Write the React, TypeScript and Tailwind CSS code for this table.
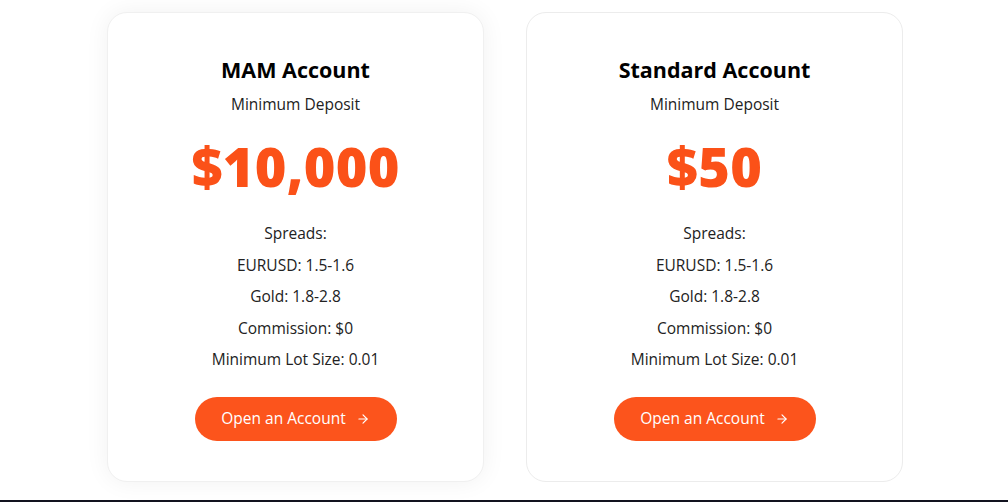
import React from 'react';
import { ArrowRight } from 'lucide-react';

interface Plan {
  name: string;
  deposit: string;
  eurusd: string;
  gold: string;
  commission: string;
  lot: string;
  raised?: boolean;
}

const plans: Plan[] = [
  { name: 'MAM Account', deposit: '$10,000', eurusd: '1.5-1.6', gold: '1.8-2.8', commission: '$0', lot: '0.01', raised: true },
  { name: 'Standard Account', deposit: '$50', eurusd: '1.5-1.6', gold: '1.8-2.8', commission: '$0', lot: '0.01' },
];

const PlanCard: React.FC<{ plan: Plan }> = ({ plan }) => (
  <div
    className={
      plan.raised
        ? 'w-[377px] h-[470px] bg-white rounded-[20px] border border-[#f0f0f0] shadow-[0_0_24px_rgba(0,0,0,0.06)] flex flex-col items-center pt-[42px]'
        : 'w-[377px] h-[470px] bg-white rounded-[20px] border border-[#ececec] flex flex-col items-center pt-[42px]'
    }
  >
    {/* Header */}
    <h3 className="text-[21.5px] leading-[30px] font-bold text-black">{plan.name}</h3>
    <p className="mt-[8px] text-[15.5px] leading-[22px] text-[#222]">Minimum Deposit</p>
    <div className="mt-[16px] text-[54px] leading-[70px] font-extrabold text-[#fb5118] tracking-[0.3px]">{plan.deposit}</div>

    {/* Spreads */}
    <div className="mt-[21px] flex flex-col items-center gap-[9.5px] text-[15.5px] leading-[22px] text-[#222]">
      <span>Spreads:</span>
      <span>EURUSD: {plan.eurusd}</span>
      <span>Gold: {plan.gold}</span>
      <span>Commission: {plan.commission}</span>
      <span>Minimum Lot Size: {plan.lot}</span>
    </div>

    <button className="mt-[27px] w-[202px] h-[44px] rounded-full bg-[#fc541c] text-white text-[15.5px] flex items-center justify-center gap-[10px]">
      Open an Account
      <ArrowRight className="w-[14px] h-[14px]" strokeWidth={2} />
    </button>
  </div>
);

export default function App() {
  return (
    <div className="w-[1008px] h-[502px] bg-white flex flex-col" style={{ fontFamily: '"Open Sans", "Liberation Sans", sans-serif' }}>
      <div className="flex-1 flex justify-center gap-[42px] pt-[12px] pl-[2px]">
        {plans.map((p) => (
          <PlanCard key={p.name} plan={p} />
        ))}
      </div>
      <div className="h-[2px] bg-[#12131f]" />
    </div>
  );
}
